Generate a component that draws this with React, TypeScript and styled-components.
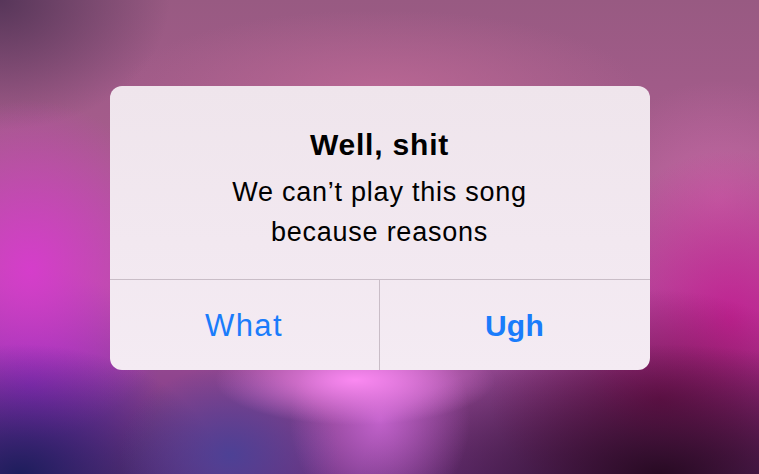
import React from "react";
import styled, { createGlobalStyle } from "styled-components";

const GlobalStyle = createGlobalStyle`
  html, body {
    margin: 0;
    padding: 0;
    width: 100%;
    height: 100%;
    overflow: hidden;
  }
  body {
    font-family: "Liberation Sans", Arial, sans-serif;
  }
  #root {
    height: 100%;
  }
`;

const Backdrop = styled.div`
  width: 759px;
  height: 474px;
  box-sizing: border-box;
  padding-top: 86px;
  display: flex;
  justify-content: center;
  align-items: flex-start;
  background:
    radial-gradient(ellipse 140px 45px at 355px 380px, rgba(255, 140, 245, 0.95), rgba(255, 140, 245, 0) 100%),
    radial-gradient(ellipse 90px 100px at 380px 420px, rgba(215, 110, 225, 0.75), rgba(215, 110, 225, 0) 100%),
    radial-gradient(ellipse 110px 90px at 230px 455px, rgba(75, 65, 150, 0.95), rgba(75, 65, 150, 0) 100%),
    radial-gradient(ellipse 200px 130px at 20px 474px, rgba(25, 28, 90, 0.95), rgba(25, 28, 90, 0) 100%),
    radial-gradient(ellipse 300px 130px at 660px 474px, rgba(40, 10, 35, 1), rgba(40, 10, 35, 0) 100%),
    radial-gradient(ellipse 170px 110px at 660px 400px, rgba(120, 15, 80, 0.85), rgba(120, 15, 80, 0) 100%),
    radial-gradient(ellipse 150px 170px at 730px 320px, rgba(195, 30, 145, 0.9), rgba(195, 30, 145, 0) 100%),
    radial-gradient(ellipse 120px 120px at 720px 200px, rgba(210, 110, 175, 0.6), rgba(210, 110, 175, 0) 100%),
    radial-gradient(ellipse 150px 170px at 30px 270px, rgba(215, 60, 205, 0.95), rgba(215, 60, 205, 0) 100%),
    radial-gradient(ellipse 130px 120px at 30px 385px, rgba(135, 40, 195, 0.95), rgba(135, 40, 195, 0) 100%),
    radial-gradient(ellipse 170px 130px at 0px 0px, rgba(80, 50, 85, 0.9), rgba(80, 50, 85, 0) 100%),
    radial-gradient(ellipse 260px 80px at 380px 90px, rgba(190, 105, 150, 0.8), rgba(190, 105, 150, 0) 100%),
    linear-gradient(180deg, #985a82 0%, #a85c8e 35%, #b0559c 60%, #6e3480 100%);
`;

const Alert = styled.div`
  width: 540px;
  height: 284px;
  border-radius: 12px;
  overflow: hidden;
  display: flex;
  flex-direction: column;
  background: linear-gradient(180deg, #efe5ec 0%, #f2e8f0 55%, #f4ebf3 100%);
`;

const Message = styled.div`
  box-sizing: border-box;
  height: 194px;
  padding-top: 41px;
  display: flex;
  flex-direction: column;
  align-items: center;
  border-bottom: 1px solid #c9bdc7;
`;

const Title = styled.div`
  font-size: 30px;
  line-height: 36px;
  font-weight: 700;
  color: #000;
  letter-spacing: 0.8px;
`;

const Body = styled.div`
  margin-top: 10px;
  font-size: 27px;
  line-height: 39.5px;
  color: #000;
  text-align: center;
  letter-spacing: 0.75px;
`;

const Buttons = styled.div`
  flex: 1;
  display: grid;
  grid-template-columns: 1fr 1fr;
`;

const Button = styled.div<{ $bold?: boolean; $divider?: boolean }>`
  display: flex;
  align-items: center;
  justify-content: center;
  line-height: 89px;
  font-size: ${(p) => (p.$bold ? "30px" : "31px")};
  font-weight: ${(p) => (p.$bold ? 700 : 400)};
  letter-spacing: ${(p) => (p.$bold ? "0.3px" : "1.4px")};
  color: #1a7cfb;
  border-right: ${(p) => (p.$divider ? "1px solid #c9bdc7" : "none")};
`;

export default function App() {
  return (
    <>
      <GlobalStyle />
      <Backdrop>
        <Alert>
          <Message>
            <Title>Well, shit</Title>
            <Body>
              We can’t play this song
              <br />
              because reasons
            </Body>
          </Message>
          <Buttons>
            <Button $divider>What</Button>
            <Button $bold>Ugh</Button>
          </Buttons>
        </Alert>
      </Backdrop>
    </>
  );
}
